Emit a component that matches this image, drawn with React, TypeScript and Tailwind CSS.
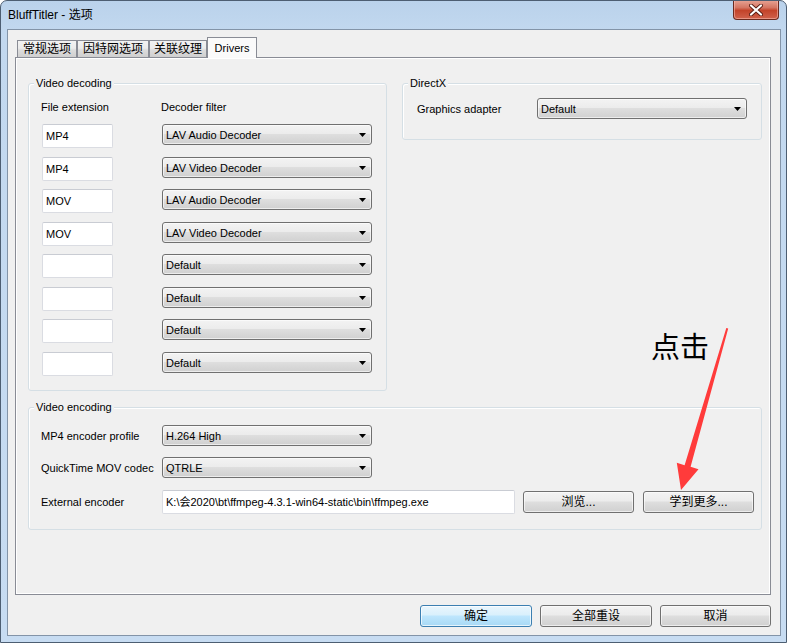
import React from "react";

const comboBg =
  "bg-[linear-gradient(to_bottom,#f3f3f3_0%,#ececec_45%,#dedede_50%,#d0d0d0_100%)]";

function Arrow() {
  return (
    <svg width="7" height="4" viewBox="0 0 7 4" className="shrink-0">
      <path d="M0 0 H7 L3.5 4 Z" fill="#000" />
    </svg>
  );
}

function Combo({ value, className }: { value: string; className: string }) {
  return (
    <div
      className={`flex h-[21px] items-center justify-between rounded-[3px] border border-[#707070] ${comboBg} pl-[3px] pr-[5px] shadow-[inset_0_0_0_1px_rgba(255,255,255,0.6)] ${className}`}
    >
      <span className="leading-[14px] text-black">{value}</span>
      <Arrow />
    </div>
  );
}

function TextBox({ value, className }: { value: string; className: string }) {
  return (
    <div
      className={`flex items-center rounded-[2px] border border-[#dadce2] border-t-[#c9ccd3] bg-white pl-[3px] leading-[14px] ${className}`}
    >
      {value}
    </div>
  );
}

function Button({
  label,
  className,
  primary,
}: {
  label: string;
  className: string;
  primary?: boolean;
}) {
  return (
    <div
      className={`flex h-[22px] items-center justify-center rounded-[3px] border text-[12px] leading-[14px] text-black ${
        primary
          ? "border-[#3c7fb1] bg-[linear-gradient(to_bottom,#eaf6fd_0%,#d9f0fc_45%,#bee6fd_50%,#a7d9f5_100%)] shadow-[inset_0_0_0_1px_rgba(255,255,255,0.7)]"
          : `border-[#707070] ${comboBg} shadow-[inset_0_0_0_1px_rgba(255,255,255,0.6)]`
      } ${className}`}
    >
      {label}
    </div>
  );
}

function Group({
  label,
  className,
  children,
}: {
  label: string;
  className: string;
  children: React.ReactNode;
}) {
  return (
    <div
      className={`relative shrink-0 rounded-[3px] border border-[#d5dfe5] shadow-[inset_1px_1px_0_#ffffff] ${className}`}
    >
      <span className="absolute left-[5px] top-[-8px] bg-[#f0f0f0] px-[2px] leading-[14px] text-black">
        {label}
      </span>
      {children}
    </div>
  );
}

const decoders: [string, string][] = [
  ["MP4", "LAV Audio Decoder"],
  ["MP4", "LAV Video Decoder"],
  ["MOV", "LAV Audio Decoder"],
  ["MOV", "LAV Video Decoder"],
  ["", "Default"],
  ["", "Default"],
  ["", "Default"],
  ["", "Default"],
];

export default function App() {
  return (
    <div className="relative flex h-[643px] w-[787px] flex-col overflow-hidden rounded-t-[7px] border border-[#4d5e72] bg-[linear-gradient(to_bottom,#bad2eb_0px,#c2d8ef_30px,#c7dcf2_100%)] font-['Liberation_Sans','Noto_Sans_CJK_SC',sans-serif] text-[11px] text-black">
      {/* Title bar */}
      <div className="flex h-[28px] shrink-0 items-start justify-between">
        <div className="pl-[7px] pt-[6px] text-[12px] leading-[16px] text-black">
          BluffTitler - 选项
        </div>
        <div className="mr-[7px] mt-[-1px] flex h-[20px] w-[46px] items-center justify-center rounded-b-[4px] border border-[#6b2a1f] border-t-0 bg-[linear-gradient(to_bottom,#e8a596_0%,#d47663_40%,#c3432a_55%,#d0624c_100%)] shadow-[inset_0_0_0_1px_rgba(255,200,190,0.5)]">
          <svg width="14" height="12" viewBox="0 0 14 12">
            <path d="M2 1.5 L12 10.5 M12 1.5 L2 10.5" stroke="#5a1e14" strokeWidth="4" strokeLinecap="round" />
            <path d="M2 1.5 L12 10.5 M12 1.5 L2 10.5" stroke="#ffffff" strokeWidth="2.2" strokeLinecap="round" />
          </svg>
        </div>
      </div>

      {/* Client area */}
      <div className="mb-[6px] ml-[6px] mr-[5px] flex flex-1 flex-col border border-[#8394a8] bg-[#f0f0f0] pl-[7px] pt-[7px]">
        {/* Tabs */}
        <div className="flex h-[20px] items-end pl-[2px]">
          <div className="flex h-[17px] w-[60px] items-center justify-center border border-b-0 border-[#898c95] bg-[linear-gradient(to_bottom,#f2f2f2_0%,#ebebeb_45%,#dddddd_55%,#cfcfcf_100%)] text-[12px] leading-[14px]">
            常规选项
          </div>
          <div className="flex h-[17px] w-[72px] items-center justify-center border border-b-0 border-[#898c95] bg-[linear-gradient(to_bottom,#f2f2f2_0%,#ebebeb_45%,#dddddd_55%,#cfcfcf_100%)] text-[12px] leading-[14px]">
            因特网选项
          </div>
          <div className="flex h-[17px] w-[58px] items-center justify-center border border-b-0 border-[#898c95] bg-[linear-gradient(to_bottom,#f2f2f2_0%,#ebebeb_45%,#dddddd_55%,#cfcfcf_100%)] text-[12px] leading-[14px]">
            关联纹理
          </div>
          <div className="relative z-10 mb-[-1px] flex h-[21px] w-[50px] items-start justify-center border border-b-0 border-[#898c95] bg-[#fafafa] pt-[3px] leading-[14px]">
            Drivers
          </div>
        </div>

        {/* Tab panel */}
        <div className="flex h-[538px] w-[756px] flex-col border border-[#898c95] bg-[#f0f0f0] pl-[12px] pt-[25px] shadow-[inset_1px_1px_0_#ffffff,inset_-1px_-1px_0_#ffffff]">
          <div className="flex items-start gap-[15px]">
            {/* Video decoding */}
            <Group label="Video decoding" className="h-[308px] w-[359px]">
              <div className="flex flex-col pl-[12px] pt-[16px]">
                <div className="flex h-[14px] leading-[14px]">
                  <span className="w-[120px]">File extension</span>
                  <span>Decoder filter</span>
                </div>
                <div className="mt-[10px] flex flex-col">
                  {decoders.map(([ext, dec], i) => (
                    <div
                      key={i}
                      className={`flex h-[24px] items-start ${
                        i === 0 ? "" : i % 2 === 1 ? "mt-[9px]" : "mt-[8px]"
                      }`}
                    >
                      <TextBox value={ext} className="ml-[1px] h-[24px] w-[71px]" />
                      <Combo value={dec} className="ml-[49px] w-[210px]" />
                    </div>
                  ))}
                </div>
              </div>
            </Group>

            {/* DirectX */}
            <Group label="DirectX" className="h-[57px] w-[360px]">
              <div className="mt-[14px] flex h-[21px] items-center pl-[14px]">
                <span className="w-[120px] leading-[14px]">Graphics adapter</span>
                <Combo value="Default" className="w-[210px]" />
              </div>
            </Group>
          </div>

          {/* Video encoding */}
          <Group label="Video encoding" className="mt-[16px] h-[123px] w-[734px]">
            <div className="flex flex-col pl-[12px] pt-[17px]">
              <div className="flex h-[21px] items-center">
                <span className="w-[121px] leading-[14px]">MP4 encoder profile</span>
                <Combo value="H.264 High" className="w-[210px]" />
              </div>
              <div className="mt-[11px] flex h-[21px] items-center">
                <span className="w-[121px] leading-[14px]">QuickTime MOV codec</span>
                <Combo value="QTRLE" className="w-[210px]" />
              </div>
              <div className="mt-[12px] flex h-[24px] items-center">
                <span className="w-[121px] leading-[14px]">External encoder</span>
                <TextBox
                  value="K:\会2020\bt\ffmpeg-4.3.1-win64-static\bin\ffmpeg.exe"
                  className="h-[24px] w-[353px]"
                />
                <Button label="浏览..." className="ml-[8px] w-[111px]" />
                <Button label="学到更多..." className="ml-[9px] w-[111px]" />
              </div>
            </div>
          </Group>
        </div>

        {/* Bottom buttons */}
        <div className="mt-[10px] flex justify-end gap-[8px] pr-[9px]">
          <Button label="确定" primary className="w-[112px]" />
          <Button label="全部重设" className="w-[112px]" />
          <Button label="取消" className="w-[111px]" />
        </div>
      </div>

      {/* Annotation */}
      <div className="absolute left-[650px] top-[330px] font-['Noto_Sans_CJK_SC',sans-serif] text-[29px] leading-[29px] text-black">
        点击
      </div>
      <svg
        className="absolute left-0 top-0"
        width="787"
        height="643"
        viewBox="0 0 787 643"
      >
        <polygon
          points="725.3,327 727.2,327.5 689.6,465.8 697.5,468.2 680,489 675.8,461.8 683.6,464.2"
          fill="#ff3b3b"
        />
      </svg>
    </div>
  );
}
